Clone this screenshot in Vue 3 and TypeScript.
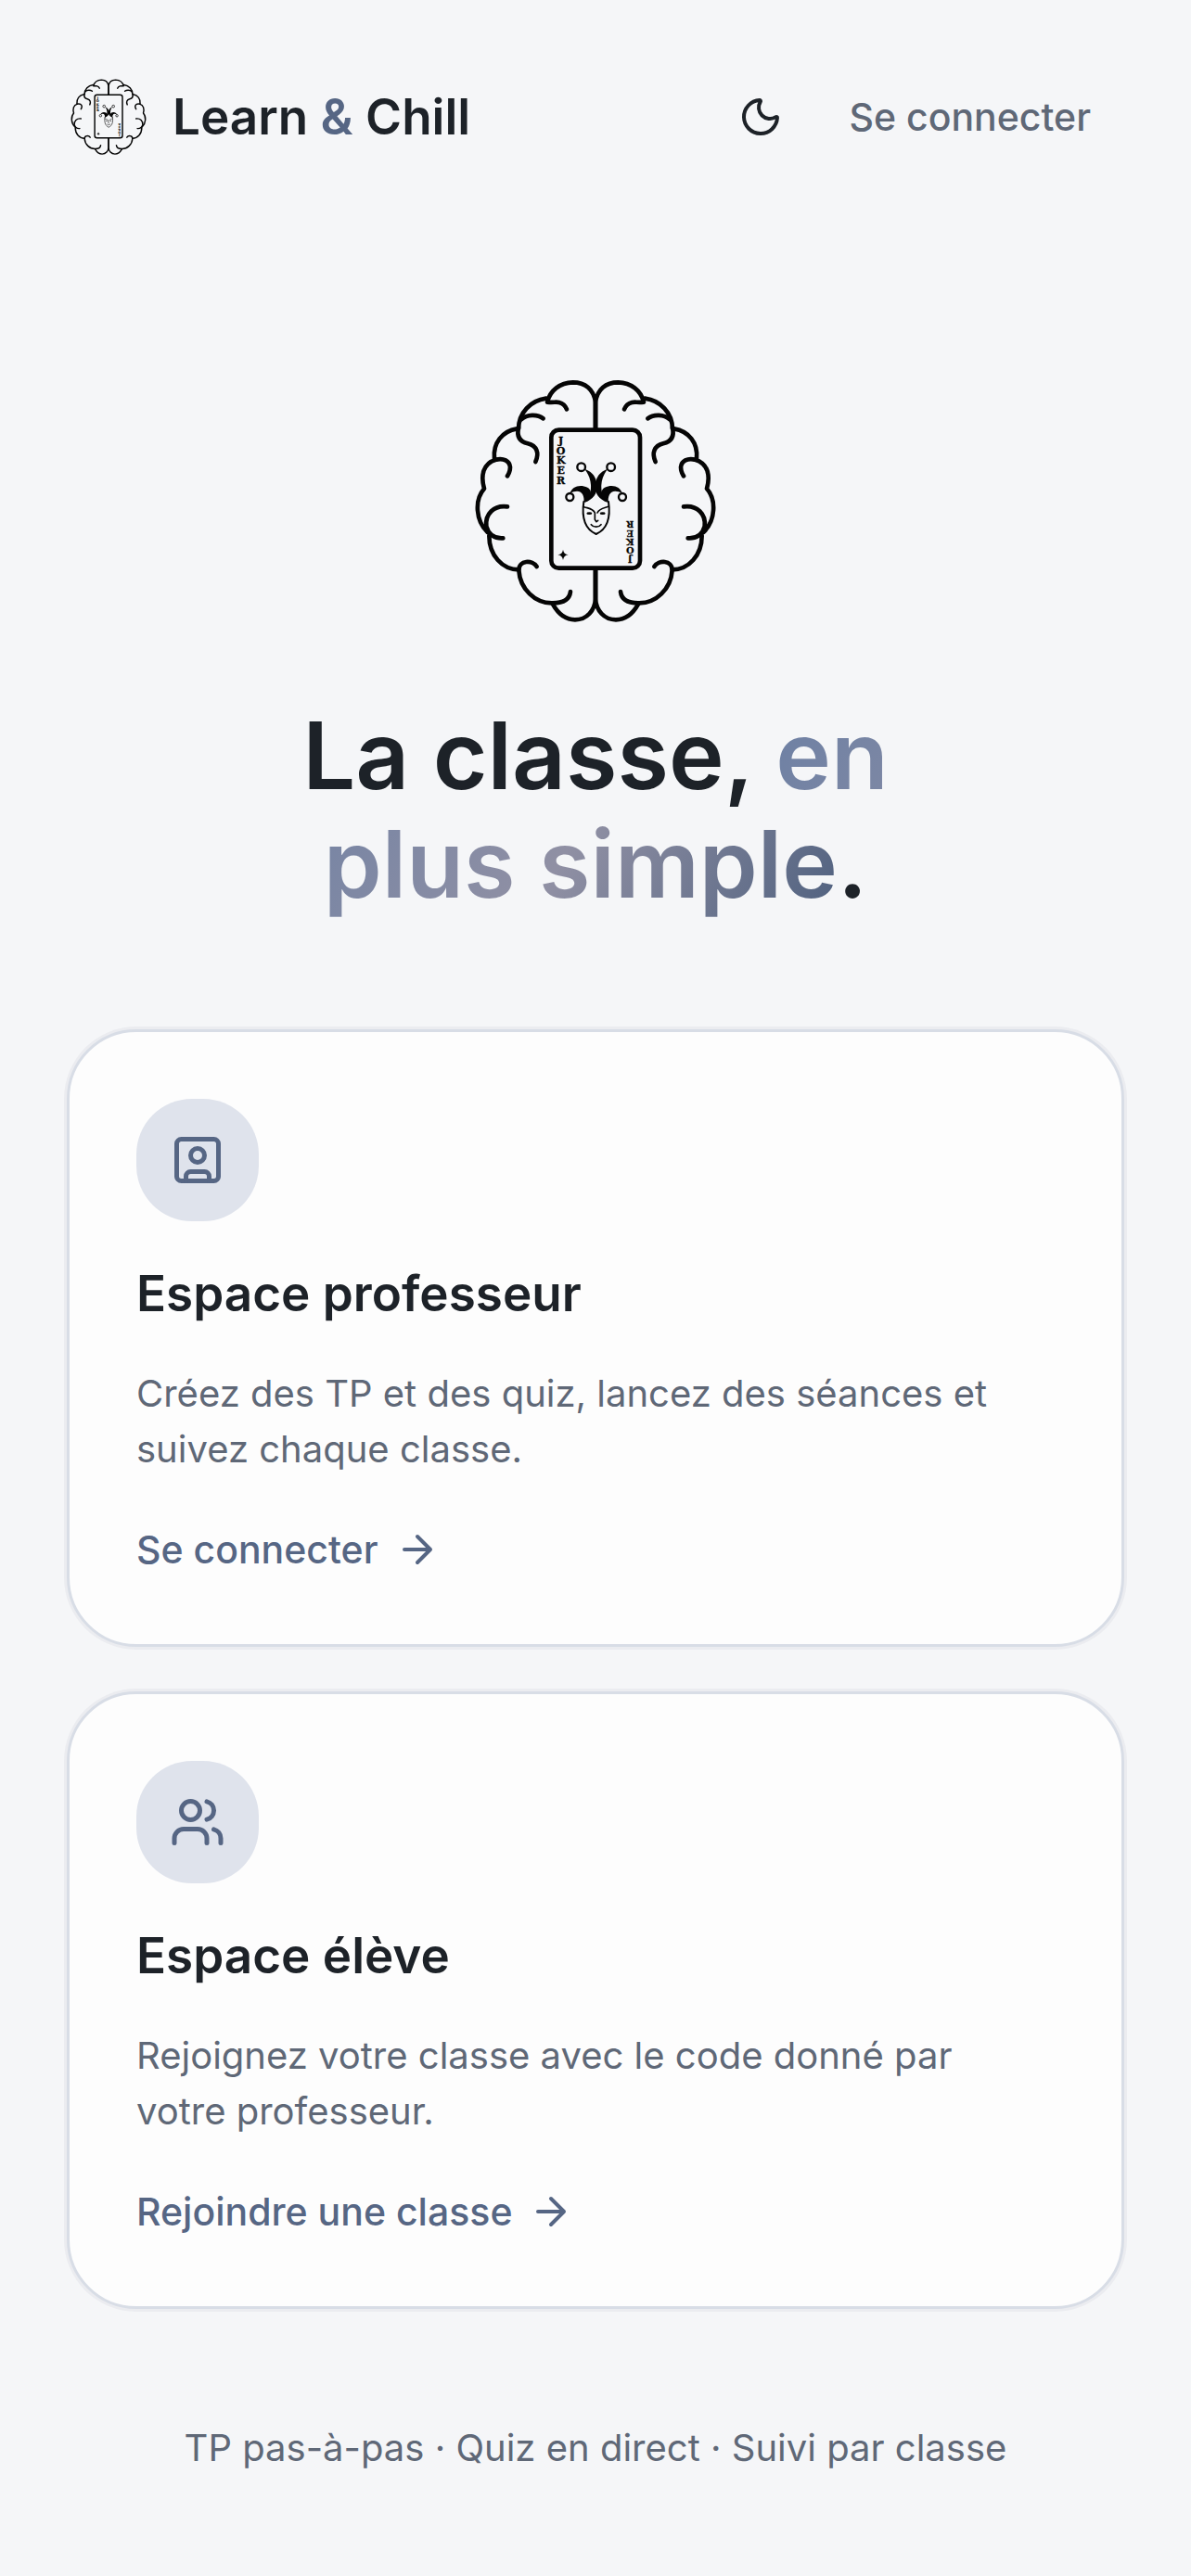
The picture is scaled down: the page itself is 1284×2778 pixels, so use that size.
<script setup lang="ts">
import { defineComponent, h } from 'vue'

interface Space {
  title: string
  text: string
  action: string
  icon: 'teacher' | 'students'
}

const spaces: Space[] = [
  {
    title: 'Espace professeur',
    text: 'Créez des TP et des quiz, lancez des séances et suivez chaque classe.',
    action: 'Se connecter',
    icon: 'teacher',
  },
  {
    title: 'Espace élève',
    text: 'Rejoignez votre classe avec le code donné par votre professeur.',
    action: 'Rejoindre une classe',
    icon: 'students',
  },
]

const brainHalf = [
  'M426 192V104C420 62 392 40 353 40C311 41 279 66 270 104C293 106 297 102 308 105C320 108 328 115 333 127',
  'M266 92C216 99 178 138 177 190',
  'M186 160C204 143 238 142 257 157',
  'M177 186C170 216 182 232 207 238C236 245 245 268 232 297',
  'M172 190C124 198 94 236 99 286',
  'M104 290C128 284 148 294 150 314C150 326 147 334 141 343',
  'M104 290C62 302 54 342 66 384C34 420 38 488 77 525',
  'M141 442C98 436 68 466 73 506C80 532 100 546 127 544',
  'M82 536C82 600 125 646 178 646',
  'M236 636C222 614 178 614 178 648C182 708 230 756 288 754C322 754 342 744 345 717',
  'M288 758C306 790 332 808 360 808C398 808 424 778 426 740V644',
]

const letters = ['J', 'O', 'K', 'E', 'R']

// Brain outline with a joker card in its centre
const Logo = defineComponent({
  setup() {
    const half = () => brainHalf.map((d) => h('path', { d }))
    const hat = () => [
      h('circle', { cx: 380, cy: 314, r: 13, fill: 'none', 'stroke-width': 7 }),
      h('circle', { cx: 343, cy: 411, r: 12, fill: 'none', 'stroke-width': 7 }),
      h('path', {
        stroke: 'none',
        d: 'M391 320C418 330 428 348 431 372C433 398 420 418 392 428C407 408 412 394 411 372C410 352 402 336 391 320Z',
      }),
      h('path', {
        stroke: 'none',
        d: 'M343 400C350 376 376 369 400 380C414 388 414 402 402 422L388 430C392 404 378 380 343 400Z',
      }),
    ]
    const word = () =>
      letters.map((l, i) => h('text', { x: 0, y: i * 32, 'text-anchor': 'middle' }, l))
    return () =>
      h('svg', { viewBox: '-6 -9 864 864', role: 'img', 'aria-label': 'Learn & Chill' }, [
        h('g', { fill: 'none', stroke: '#050505', 'stroke-width': 14, 'stroke-linecap': 'round', 'stroke-linejoin': 'round' }, [
          h('g', half()),
          h('g', { transform: 'translate(852 0) scale(-1 1)' }, half()),
          h('rect', { x: 283, y: 194, width: 287, height: 447, rx: 24 }),
        ]),
        h('g', { fill: '#050505', stroke: '#050505' }, [
          h('g', hat()),
          h('g', { transform: 'translate(856 0) scale(-1 1)' }, hat()),
          h('path', { stroke: 'none', d: 'M321 581Q323 596 338 598Q323 600 321 615Q319 600 304 598Q319 596 321 581Z' }),
          h('g', { fill: 'none', 'stroke-width': 6, 'stroke-linecap': 'round', 'stroke-linejoin': 'round' }, [
            h('path', { d: 'M388 426C381 474 390 514 428 531C466 514 475 474 468 426' }),
            h('path', { 'stroke-width': 5, d: 'M389 443C404 448 418 448 424 462V484L429 491L434 487M432 462C438 448 452 447 467 442' }),
            h('path', { 'stroke-width': 5, d: 'M412 500C420 510 436 510 444 500' }),
          ]),
          h('ellipse', { cx: 406, cy: 464, rx: 9, ry: 4, stroke: 'none' }),
          h('ellipse', { cx: 449, cy: 464, rx: 9, ry: 4, stroke: 'none' }),
        ]),
        h('g', { fill: '#050505', stroke: '#050505', 'stroke-width': 1, 'font-family': '"DejaVu Serif", serif', 'font-weight': 700, 'font-size': 33 }, [
          h('g', { transform: 'translate(314 240)' }, word()),
          h('g', { transform: 'translate(538 602) rotate(180) scale(.88)' }, word()),
        ]),
      ])
  },
})
</script>

<template>
  <div class="page">
    <header class="header">
      <a class="brand" href="#">
        <Logo class="brand-logo" />
        <span>Learn <span class="amp">&amp;</span> Chill</span>
      </a>
      <nav class="nav">
        <button class="theme" type="button" aria-label="Changer de thème">
          <svg class="icon-small" viewBox="0 0 24 24" aria-hidden="true">
            <path d="M20.985 12.486a9 9 0 1 1-9.473-9.472c.405-.022.617.46.402.803a6 6 0 0 0 8.268 8.268c.344-.215.825-.004.803.401" />
          </svg>
        </button>
        <a class="login" href="#">Se connecter</a>
      </nav>
    </header>

    <main class="main">
      <Logo class="hero-logo" />
      <h1 class="headline">La classe, <span class="accent">en<br />plus simple</span>.</h1>

      <div class="cards">
        <a v-for="space in spaces" :key="space.title" class="card" href="#">
          <span class="badge">
            <svg v-if="space.icon === 'teacher'" class="icon-large" viewBox="0 0 24 24" aria-hidden="true">
              <rect x="3" y="3" width="18" height="18" rx="2" />
              <circle cx="12" cy="10" r="3" />
              <path d="M7 21v-2a2 2 0 0 1 2-2h6a2 2 0 0 1 2 2v2" />
            </svg>
            <svg v-else class="icon-large" viewBox="0 0 24 24" aria-hidden="true">
              <path d="M16 21v-2a4 4 0 0 0-4-4H6a4 4 0 0 0-4 4v2" />
              <circle cx="9" cy="7" r="4" />
              <path d="M22 21v-2a4 4 0 0 0-3-3.87M16 3.13a4 4 0 0 1 0 7.75" />
            </svg>
          </span>
          <h2 class="card-title">{{ space.title }}</h2>
          <p class="card-text">{{ space.text }}</p>
          <span class="card-action">
            {{ space.action }}
            <svg class="icon-small" viewBox="0 0 24 24" aria-hidden="true">
              <path d="M5 12h14M12 5l7 7-7 7" />
            </svg>
          </span>
        </a>
      </div>
    </main>

    <footer class="footer">TP pas-à-pas · Quiz en direct · Suivi par classe</footer>
  </div>
</template>

<style>
body {
  background: #f5f6f8;
}
</style>

<style scoped>
.page {
  box-sizing: border-box;
  min-height: 100vh;
  padding: 72px 72px 108px;
  background: #f5f6f8;
  color: #1d2228;
  font-family: Inter, "Liberation Sans", sans-serif;
  font-size: 40px;
  line-height: 60px;
}

a {
  color: inherit;
  text-decoration: none;
}

svg {
  display: block;
  flex: none;
}

.header,
.brand,
.nav,
.card-action {
  display: flex;
  align-items: center;
}

.header {
  justify-content: space-between;
}

.brand {
  gap: 24px;
  font-size: 53px;
  font-weight: 600;
}

.brand-logo {
  width: 90px;
  height: 90px;
}

.amp {
  color: #566684;
}

.nav {
  gap: 6px;
}

.theme {
  display: grid;
  place-items: center;
  width: 108px;
  height: 108px;
  padding: 0;
  border: 0;
  border-radius: 54px;
  background: none;
  color: inherit;
}

.login {
  padding: 24px 36px;
  color: #5f6877;
  font-size: 41px;
  font-weight: 500;
}

.icon-small,
.icon-large {
  fill: none;
  stroke: currentColor;
  stroke-width: 2;
  stroke-linecap: round;
  stroke-linejoin: round;
}

.icon-small {
  width: 48px;
  height: 48px;
}

.icon-large {
  width: 60px;
  height: 60px;
}

.main {
  display: flex;
  flex-direction: column;
  align-items: center;
  padding-top: 216px;
}

.hero-logo {
  width: 288px;
  height: 288px;
}

.headline {
  margin: 72px 0 120px;
  font-size: 101px;
  font-weight: 600;
  line-height: 117px;
  text-align: center;
}

.accent {
  background: linear-gradient(120deg, #6d80a4, #9090a4 55%, #50617f);
  background-clip: text;
  color: transparent;
}

.cards {
  display: grid;
  gap: 48px;
  width: 100%;
}

.card {
  display: flex;
  flex-direction: column;
  align-items: flex-start;
  padding: 72px;
  border: 3px solid #d8dde6;
  border-radius: 75px;
  background: #fdfdfd;
  box-shadow: 0 0 0 3px #ebecf0;
}

.badge {
  display: grid;
  place-items: center;
  width: 132px;
  height: 132px;
  border-radius: 60px;
  background: #dfe3ec;
  color: #566684;
}

.card-title {
  margin: 42px 0;
  font-size: 53px;
  font-weight: 600;
  line-height: 72px;
}

.card-text {
  max-width: 960px;
  margin: 0 0 48px;
  color: #5f6877;
}

.card-action {
  gap: 18px;
  color: #566684;
  font-size: 41px;
  font-weight: 500;
}

.footer {
  margin-top: 120px;
  color: #5f6877;
  text-align: center;
}
</style>
